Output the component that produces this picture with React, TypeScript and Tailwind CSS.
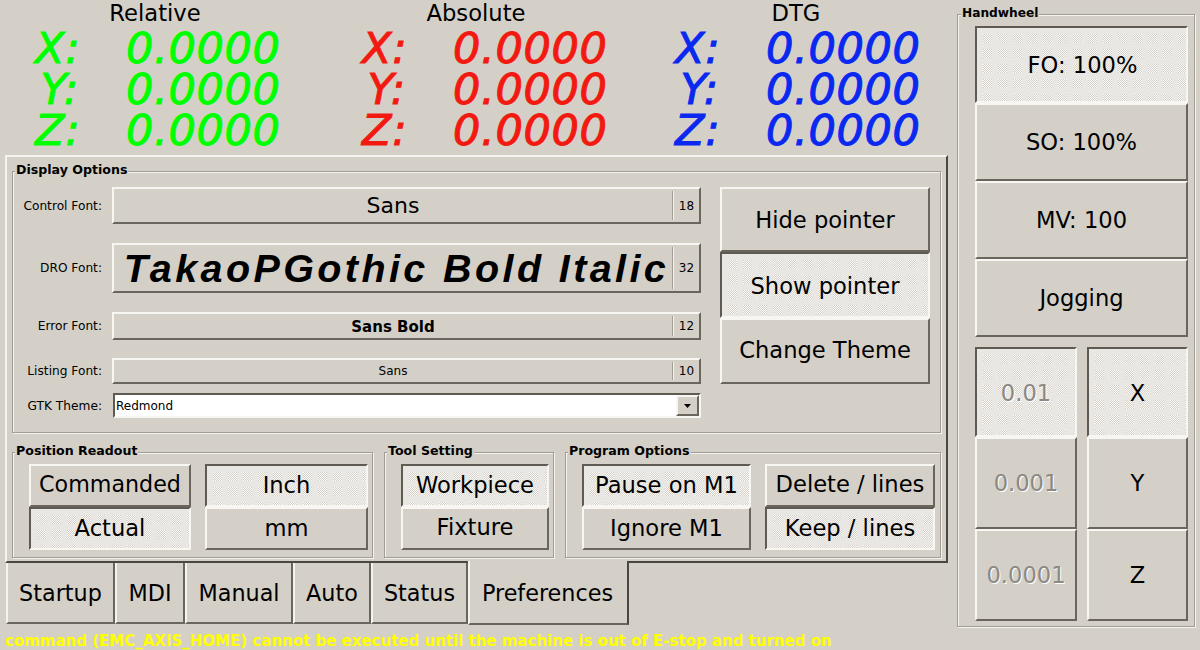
import React from "react";

const raised =
  "border-2 border-t-[#f7f6f3] border-l-[#f7f6f3] border-r-[#6a665d] border-b-[#6a665d] bg-[#d4d0c8]";
const pressed =
  "border-2 border-t-[#5f5b52] border-l-[#5f5b52] border-r-[#f7f6f3] border-b-[#f7f6f3] [background-color:#e9e7e3] [background-image:linear-gradient(90deg,#e9e7e3_6px,transparent_6px),linear-gradient(#e9e7e3_6px,transparent_6px),repeating-conic-gradient(#d4d0c8_0_25%,#fbfaf8_0_50%)] [background-size:15px_15px,15px_15px,2px_2px]";

function Btn({
  active,
  dim,
  className = "",
  children,
}: {
  active?: boolean;
  dim?: boolean;
  className?: string;
  children: React.ReactNode;
}) {
  return (
    <div
      className={`flex items-center justify-center whitespace-nowrap text-[22.6px] leading-none ${active ? pressed : raised} ${
        dim ? "text-[#8b8984] [text-shadow:1px_1px_0_#fff]" : "text-black"
      } ${className}`}
    >
      {children}
    </div>
  );
}

function Frame({
  label,
  className,
  labelClass = "-top-[10px] left-[2px] text-[12.6px]",
  children,
}: {
  label: string;
  className: string;
  labelClass?: string;
  children: React.ReactNode;
}) {
  return (
    <div className={`relative border border-[#a19d94] shadow-[inset_1px_1px_0_#f4f3f0,1px_1px_0_#f4f3f0] ${className}`}>
      <span className={`absolute bg-[#d4d0c8] px-px font-bold leading-[15px] text-black ${labelClass}`}>
        {label}
      </span>
      {children}
    </div>
  );
}

function Dro({
  title,
  titleW,
  width,
  color,
}: {
  title: string;
  titleW: string;
  width: string;
  color: string;
}) {
  const rows = ["X:", "Y:", "Z:"];
  return (
    <div className={`flex flex-col ${width}`}>
      <div className={`h-[28px] pt-px text-center text-[22.67px] leading-[25px] text-black ${titleW}`}>{title}</div>
      {rows.map((r) => (
        <div
          key={r}
          className={`flex h-[41px] text-[43px] italic leading-[41px] tracking-[0.7px] [-webkit-text-stroke:1px_currentColor] ${color}`}
        >
          <span className="w-[44px] text-right">{r}</span>
          <span className="ml-[47px]">0.0000</span>
        </div>
      ))}
    </div>
  );
}

function FontRow({
  label,
  value,
  size,
  className,
  textClass,
}: {
  label: string;
  value: string;
  size: string;
  className: string;
  textClass: string;
}) {
  return (
    <div className={`flex items-center ${className}`}>
      <span className="w-[89px] pt-px text-right text-[12.2px] text-black">{label}</span>
      <div className={`ml-[10px] flex h-full w-[589px] items-stretch ${raised}`}>
        <div className={`flex min-w-0 flex-1 items-center justify-center whitespace-nowrap text-black ${textClass}`}>
          {value}
        </div>
        <div className="my-[2px] w-[2px] border-l border-r border-l-[#a19d94] border-r-[#f4f3f0]" />
        <div className="flex w-[25px] items-center justify-center text-[12px] text-black">{size}</div>
      </div>
    </div>
  );
}

function Tab({ w, children }: { w: string; children: React.ReactNode }) {
  return (
    <div
      className={`mt-[2px] flex h-[61px] items-center justify-center border-b-2 border-l-2 border-r-2 border-b-[#6a665d] border-l-[#f4f3f0] border-r-[#6a665d] pt-[2px] text-[22.3px] text-black ${w}`}
    >
      {children}
    </div>
  );
}

export default function App() {
  return (
    <div className="flex h-[650px] w-[1200px] overflow-hidden bg-[#d4d0c8] font-['DejaVu_Sans',sans-serif]">
      <div className="flex w-[957px] flex-col">
        <div className="flex h-[155px] pl-[35px]">
          <Dro title="Relative" titleW="w-[240px]" width="w-[327px]" color="text-[#00ff00]" />
          <Dro title="Absolute" titleW="w-[228px]" width="w-[313px]" color="text-[#f21a10]" />
          <Dro title="DTG" titleW="w-[242px]" width="w-[270px]" color="text-[#0a28f0]" />
        </div>

        <div className="ml-[5px] flex h-[408px] w-[943px] flex-col border-2 border-t-[#f4f3f0] border-l-[#f4f3f0] border-r-[#4a4740] border-b-[#4a4740] pl-[5px] pt-[14px]">
          <Frame label="Display Options" className="flex h-[262px] w-[929px] pt-[15px]">
            <div className="flex w-[689px] flex-col">
              <FontRow label="Control Font:" value="Sans" size="18" className="h-[37px]" textClass="text-[22px]" />
              <FontRow
                label="DRO Font:"
                value="TakaoPGothic Bold Italic"
                size="32"
                className="mt-[19px] h-[50px]"
                textClass="pl-[7px] pt-[2px] font-['Liberation_Sans',sans-serif] text-[39.5px] font-bold italic tracking-[3.4px]"
              />
              <FontRow
                label="Error Font:"
                value="Sans Bold"
                size="12"
                className="mt-[19px] h-[28px]"
                textClass="pt-[2px] text-[15px] font-bold"
              />
              <FontRow label="Listing Font:" value="Sans" size="10" className="mt-[18px] h-[26px]" textClass="text-[12px]" />
              <div className="mt-[9px] flex h-[25px] items-center">
                <span className="w-[89px] pt-px text-right text-[12.2px] text-black">GTK Theme:</span>
                <div className="ml-[11px] flex h-full w-[588px] items-center justify-between border-2 border-t-[#5f5b52] border-l-[#5f5b52] border-r-[#f7f6f3] border-b-[#f7f6f3] bg-white pl-[1px]">
                  <span className="text-[12px] text-black">Redmond</span>
                  <div className={`flex h-[21px] w-[23px] items-center justify-center ${raised}`}>
                    <svg width="7" height="4" viewBox="0 0 7 4">
                      <polygon points="0,0 7,0 3.5,4" fill="#000" />
                    </svg>
                  </div>
                </div>
              </div>
            </div>
            <div className="ml-[18px] flex w-[210px] flex-col">
              <Btn className="h-[65px] pt-[2px]">Hide pointer</Btn>
              <Btn active className="h-[66px] pt-[2px]">
                Show pointer
              </Btn>
              <Btn className="h-[66px] pb-[2px]">Change Theme</Btn>
            </div>
          </Frame>

          <div className="mt-[19px] flex gap-[11px]">
            <Frame label="Position Readout" className="grid h-[106px] w-[361px] grid-cols-[162px_163px] grid-rows-[43px_43px] gap-x-[14px] pl-[16px] pt-[11px]">
              <Btn className="pb-[2px]">
                <span className="text-[22.2px]">Commanded</span>
              </Btn>
              <Btn active>Inch</Btn>
              <Btn active>Actual</Btn>
              <Btn>mm</Btn>
            </Frame>
            <Frame label="Tool Setting" className="grid h-[106px] w-[170px] grid-cols-[148px] grid-rows-[43px_43px] pl-[16px] pt-[11px]">
              <Btn active>Workpiece</Btn>
              <Btn className="pb-[2px]">Fixture</Btn>
            </Frame>
            <Frame label="Program Options" className="grid h-[106px] w-[376px] grid-cols-[169px_170px] grid-rows-[43px_43px] gap-x-[14px] pl-[16px] pt-[11px]">
              <Btn active>Pause on M1</Btn>
              <Btn className="pb-[2px]">Delete / lines</Btn>
              <Btn>Ignore M1</Btn>
              <Btn active>Keep / lines</Btn>
            </Frame>
          </div>
        </div>

        <div className="relative -mt-[2px] ml-[6px] flex h-[64px]">
          <Tab w="w-[109px]">Startup</Tab>
          <Tab w="w-[70px]">MDI</Tab>
          <Tab w="w-[108px]">Manual</Tab>
          <Tab w="w-[78px]">Auto</Tab>
          <Tab w="w-[97px]">Status</Tab>
          <div className="flex h-[64px] w-[161px] items-center justify-center border-b-2 border-l-2 border-r-2 border-b-[#6a665d] border-l-[#f4f3f0] border-r-[#4a4740] bg-[#d4d0c8] pr-[2px] pt-[3px] text-[22.3px] text-black">
            Preferences
          </div>
        </div>

        <div className="flex-1 whitespace-nowrap pl-[5px] pt-[7px] text-[15px] font-bold leading-[18px] text-[#ffff00]">
          command (EMC_AXIS_HOME) cannot be executed until the machine is out of E-stop and turned on
        </div>
      </div>

      <Frame
        label="Handwheel"
        labelClass="-top-[9px] left-[3px] text-[12.2px]"
        className="mt-[14px] flex h-[613px] w-[238px] flex-col pl-[17px] pt-[11px]"
      >
        <Btn active className="h-[77px] w-[213px] pl-[2px] pt-[2px]">
          FO: 100%
        </Btn>
        <Btn className="h-[78px] w-[213px]">SO: 100%</Btn>
        <Btn className="h-[78px] w-[213px]">MV: 100</Btn>
        <Btn className="h-[78px] w-[213px]">Jogging</Btn>
        <div className="mt-[10px] grid w-[213px] grid-cols-[102px_101px] grid-rows-[90px_92px_92px] gap-x-[10px]">
          <Btn active dim className="pt-[2px]">
            0.01
          </Btn>
          <Btn active className="pt-[2px]">
            X
          </Btn>
          <Btn dim>0.001</Btn>
          <Btn>Y</Btn>
          <Btn dim>0.0001</Btn>
          <Btn>Z</Btn>
        </div>
      </Frame>
    </div>
  );
}
